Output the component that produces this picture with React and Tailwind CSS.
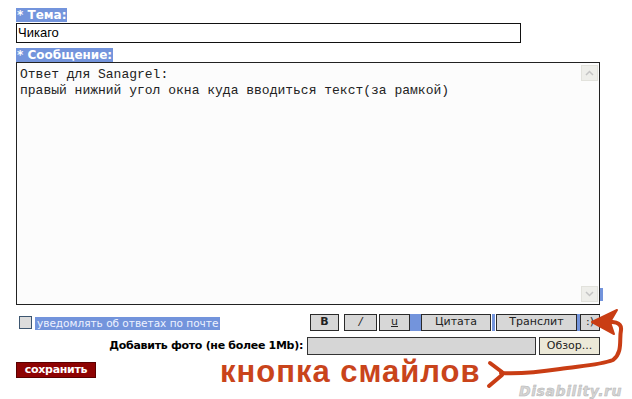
import React from 'react';

const verdana = { fontFamily: '"DejaVu Sans", Verdana, sans-serif' };

const Label = ({ children }) => (
  <div className="flex">
    <span
      className="bg-[#7394dc] text-white font-bold text-[12px] leading-[14px] px-px"
      style={verdana}
    >
      {children}
    </span>
  </div>
);

const ToolButton = ({ children, className = '' }) => (
  <div
    className={`h-[17px] flex items-center justify-center bg-[#d7d7d7] border border-[#2a2a2a] text-[11px] text-[#222] ${className}`}
    style={verdana}
  >
    {children}
  </div>
);

const Sliver = ({ w }) => <div className={`h-[17px] bg-[#7394dc] ${w}`} />;

const App = () => {
  return (
    <div className="relative w-[632px] h-[399px] bg-white overflow-hidden">
      <div className="flex flex-col pl-4 pt-2 w-[600px]">
        {/* subject */}
        <Label>* Тема:</Label>
        <div className="mt-px w-[505px] h-[20px] border border-[#111] bg-white flex items-center px-[1px]">
          <span className="text-[13px] text-black" style={{ fontFamily: '"Liberation Sans", Tahoma, sans-serif' }}>
            Чикаго
          </span>
        </div>

        {/* message */}
        <div className="mt-[5px]">
          <Label>* Сообщение:</Label>
        </div>
        <div className="relative w-[584px] h-[243px] border border-[#222] bg-[#fcfcfc] flex">
          <div
            className="flex-1 pl-[3px] pt-[4px] text-[13px] leading-[16px] text-[#222] whitespace-pre"
            style={{ fontFamily: '"Liberation Mono", "Courier New", monospace' }}
          >
            {'Ответ для Sanagrel:\nправый нижний угол окна куда вводиться текст(за рамкой)'}
          </div>
          <div className="w-[17px] flex flex-col justify-between py-[2px] mr-px">
            <div className="h-[16px] bg-[#eeeeea] border border-[#e2e2dc] flex items-center justify-center">
              <svg width="9" height="6" viewBox="0 0 9 6">
                <path d="M1 5 L4.5 1.5 L8 5" fill="none" stroke="#c4c4c4" strokeWidth="1.5" />
              </svg>
            </div>
            <div className="h-[16px] bg-[#eeeeea] border border-[#e2e2dc] flex items-center justify-center">
              <svg width="9" height="6" viewBox="0 0 9 6">
                <path d="M1 1 L4.5 4.5 L8 1" fill="none" stroke="#c4c4c4" strokeWidth="1.5" />
              </svg>
            </div>
          </div>
          <div className="absolute right-[-4px] bottom-[3px] w-[3px] h-[13px] bg-[#7394dc]" />
        </div>

        {/* toolbar row */}
        <div className="mt-[9px] flex items-center w-[584px]">
          <div className="ml-[3px] w-[13px] h-[13px] border border-[#3d5670] bg-[#dcdcdc]" />
          <span
            className="ml-[3px] mt-[2px] bg-[#7394dc] text-[#eef2ff] text-[10.5px] leading-[13px] px-[2px]"
            style={verdana}
          >
            уведомлять об ответах по почте
          </span>
          <div className="ml-auto flex items-center">
            <ToolButton className="w-[29px] font-bold">B</ToolButton>
            <div className="w-[5px]" />
            <ToolButton className="w-[33px] italic">/</ToolButton>
            <div className="w-[2px]" />
            <ToolButton className="w-[31px] underline">u</ToolButton>
            <Sliver w="w-[11px]" />
            <ToolButton className="w-[70px]">Цитата</ToolButton>
            <div className="w-[1px]" />
            <Sliver w="w-[3px]" />
            <div className="w-[1px]" />
            <ToolButton className="w-[81px]">Транслит</ToolButton>
            <Sliver w="w-[3px]" />
            <ToolButton className="w-[20px]">:)</ToolButton>
          </div>
        </div>

        {/* photo row */}
        <div className="mt-[6px] flex items-center w-[584px]">
          <span className="ml-auto text-[11px] font-bold text-black tracking-[-0.3px]" style={verdana}>
            Добавить фото (не более 1Mb):
          </span>
          <div className="ml-[4px] w-[229px] h-[18px] bg-[#d6d6d6] border border-[#333]" />
          <div
            className="ml-[3px] w-[61px] h-[18px] bg-[#ece9d8] border border-[#333] flex items-center justify-center text-[11px] text-[#222]"
            style={verdana}
          >
            Обзор...
          </div>
        </div>

        {/* save row */}
        <div className="mt-[7px] flex items-start">
          <div
            className="w-[80px] h-[16px] bg-[#8e0303] border border-[#5a0000] flex items-center justify-center text-white font-bold text-[11px] tracking-[-0.3px]"
            style={verdana}
          >
            сохранить
          </div>
          <span
            className="ml-[124px] -mt-[6px] text-[31px] leading-[31px] font-bold tracking-[1px] text-[#c9441b]"
            style={{ fontFamily: '"Liberation Sans", Arial, sans-serif' }}
          >
            кнопка смайлов
          </span>
        </div>
      </div>

      {/* hand-drawn arrow annotation */}
      <svg className="absolute inset-0 pointer-events-none" width="632" height="399" viewBox="0 0 632 399">
        <g fill="none" stroke="#c93d14" strokeWidth="4" strokeLinecap="round" strokeLinejoin="round">
          <path d="M501 373 C 520 374, 540 372, 560 369 C 580 366, 600 365, 613 360 C 623 352, 619 340, 621 330 C 622 322, 614 321, 600 322" />
          <path d="M490 363 L502 372" />
          <path d="M489 386 L502 375" />
        </g>
        <path d="M592 322 L617 310 L610 322 L614 334 Z" fill="#c93d14" stroke="#c93d14" strokeWidth="2" strokeLinejoin="round" />
      </svg>

      {/* watermark */}
      <span
        className="absolute left-[519px] top-[381px] text-[14px] font-bold italic text-[#d6d6d6] tracking-[0.6px]"
        style={{ fontFamily: '"DejaVu Sans", Verdana, sans-serif', WebkitTextStroke: '0.5px #b4b4b4' }}
      >
        Disability.ru
      </span>
    </div>
  );
};

export default App;
